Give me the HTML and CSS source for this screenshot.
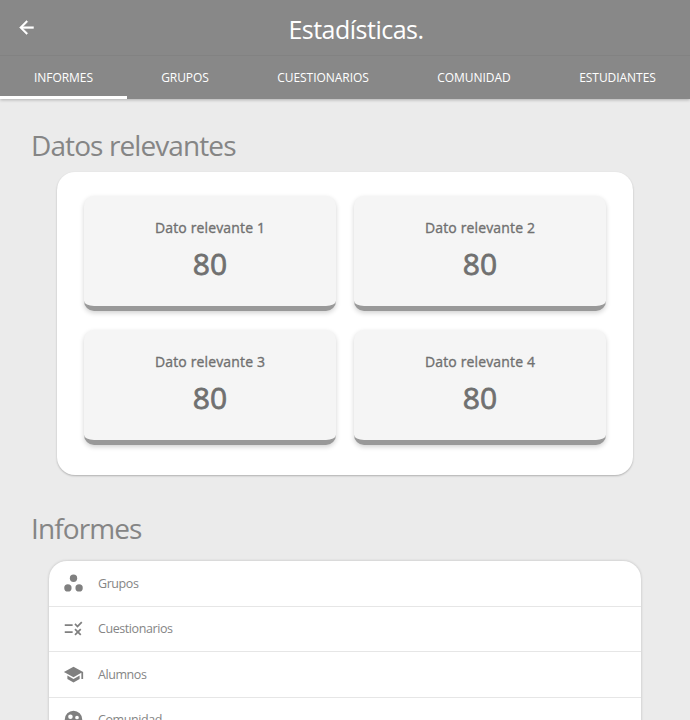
FILE: index.html
```html
<!DOCTYPE html>
<html lang="es">
<head>
<meta charset="utf-8">
<title>Estadísticas</title>
<link rel="stylesheet" href="styles.css">
</head>
<body>
<header class="header">
  <div class="toolbar">
    <svg class="back" viewBox="0 0 24 24"><path d="M20 11H7.83l5.59-5.59L12 4l-8 8 8 8 1.41-1.41L7.83 13H20z"/></svg>
    <h1 class="title">Estadísticas.</h1>
  </div>
  <nav class="tabs">
    <a class="tab active">INFORMES</a>
    <a class="tab">GRUPOS</a>
    <a class="tab">CUESTIONARIOS</a>
    <a class="tab">COMUNIDAD</a>
    <a class="tab">ESTUDIANTES</a>
  </nav>
</header>
<main class="content">
  <h2 class="heading">Datos relevantes</h2>
  <section class="panel">
    <article class="card"><h3 class="label">Dato relevante 1</h3><p class="value">80</p></article>
    <article class="card"><h3 class="label">Dato relevante 2</h3><p class="value">80</p></article>
    <article class="card"><h3 class="label">Dato relevante 3</h3><p class="value">80</p></article>
    <article class="card"><h3 class="label">Dato relevante 4</h3><p class="value">80</p></article>
  </section>
  <h2 class="heading second">Informes</h2>
  <ul class="list">
    <li class="row"><svg class="icon" viewBox="0 0 24 24"><circle cx="12" cy="6" r="4.2"/><circle cx="5.600" cy="17" r="4.2"/><circle cx="18.4" cy="17" r="4.2"/></svg><span>Grupos</span></li>
    <li class="row"><svg class="icon" viewBox="0 0 24 24"><path d="M16.54 11L13 7.46l1.41-1.41 2.12 2.12 4.24-4.24 1.41 1.41L16.54 11zM11 7H2v2h9V7zm10 6.41L19.59 12 17 14.59 14.41 12 13 13.41 15.59 16 13 18.59 14.41 20 17 17.41 19.59 20 21 18.59 18.41 16 21 13.41zM11 15H2v2h9v-2z"/></svg><span>Cuestionarios</span></li>
    <li class="row"><svg class="icon" viewBox="0 0 24 24"><path d="M5 13.18v4L12 21l7-3.82v-4L12 17l-7-3.82zM12 3L1 9l11 6 9-4.91V17h2V9L12 3z"/></svg><span>Alumnos</span></li>
    <li class="row"><svg class="icon" viewBox="0 0 24 24"><path fill-rule="evenodd" d="M12 2a10 10 0 1 0 0 20 10 10 0 0 0 0-20zM8.5 6.2a2.6 2.6 0 1 1 0 5.2 2.6 2.6 0 0 1 0-5.2zM16 7.6a2.1 2.1 0 1 1 0 4.2 2.1 2.1 0 0 1 0-4.2zM9 13c1.2 0 2.2.2 3 .6-1.5.8-2.2 2-2.2 3.4v2.7A8 8 0 0 1 4.6 15c1-1.3 2.700-2 4.400-2zM16 13.500c1.400 0 2.700.4 3.600 1.100A8 8 0 0 1 12 20v-3c0-2.100 1.900-3.500 4-3.500z"/></svg><span>Comunidad</span></li>
  </ul>
</main>
</body>
</html>
```
FILE: styles.css
```css
* { box-sizing: border-box; }
body {
  margin: 0;
  height: 720px;
  overflow: hidden;
  background: #ebebeb;
  color: #858585;
  font-family: "Open Sans", "Noto Sans", sans-serif;
}
h1, h2, h3, p, ul { margin: 0; padding: 0; font-weight: 400; }

.header {
  height: 99px;
  background: #888;
  color: #fff;
  box-shadow: 0 1px 3px rgba(0, 0, 0, .25);
}
.toolbar {
  display: grid;
  grid-template-columns: 54px 1fr 32px;
  align-items: center;
  height: 56px;
  border-bottom: 1px solid #828282;
}
.back { width: 21px; height: 21px; margin-left: 16px; fill: #fff; stroke: #fff; stroke-width: .5; }
.title { font-size: 25px; line-height: 34px; padding-top: 3px; text-align: center; letter-spacing: -.5px; }
.tabs {
  display: grid;
  grid-template-columns: 127px 116px 160px 142px 145px;
  height: 43px;
}
.tab {
  display: flex;
  align-items: center;
  justify-content: center;
  border-bottom: 3px solid transparent;
  padding-top: 3px;
  font-size: 12px;
  letter-spacing: -.05px;
}
.tab.active { border-bottom-color: #fff; }

.content { padding: 28px 49px 0; }
.heading { margin-left: -18px; font-size: 28px; line-height: 36px; letter-spacing: -.9px; }
.panel {
  display: grid;
  grid-template-columns: 252px 252px;
  grid-auto-rows: 115px;
  gap: 19px 18px;
  width: 576px;
  height: 303px;
  margin: 9px 8px 0;
  padding: 24px 27px;
  background: #fff;
  border-radius: 18px;
  box-shadow: 0 1px 2px rgba(0, 0, 0, .25);
}
.card {
  padding-top: 21px;
  text-align: center;
  color: #707070;
  background: #f5f5f5;
  border-bottom: 5px solid #999;
  border-radius: 10px;
  box-shadow: 0 2px 5px rgba(0, 0, 0, .18);
}
.label { font-size: 14px; line-height: 22px; letter-spacing: .15px; -webkit-text-stroke: .35px; }
.value { margin-top: 5px; font-size: 30px; line-height: 40px; -webkit-text-stroke: .8px; }
.second { margin-top: 35px; }
.list {
  width: 592px;
  margin-top: 15px;
  list-style: none;
  background: #fff;
  border-radius: 18px;
  box-shadow: 0 0 3px rgba(0, 0, 0, .2);
}
.row {
  display: flex;
  align-items: center;
  gap: 14px;
  height: 45.5px;
  padding-left: 14px;
  border-bottom: 1px solid #e6e6e6;
  font-size: 12.5px;
  letter-spacing: -.42px;
}
.icon { width: 21px; height: 21px; fill: #808080; }
```
